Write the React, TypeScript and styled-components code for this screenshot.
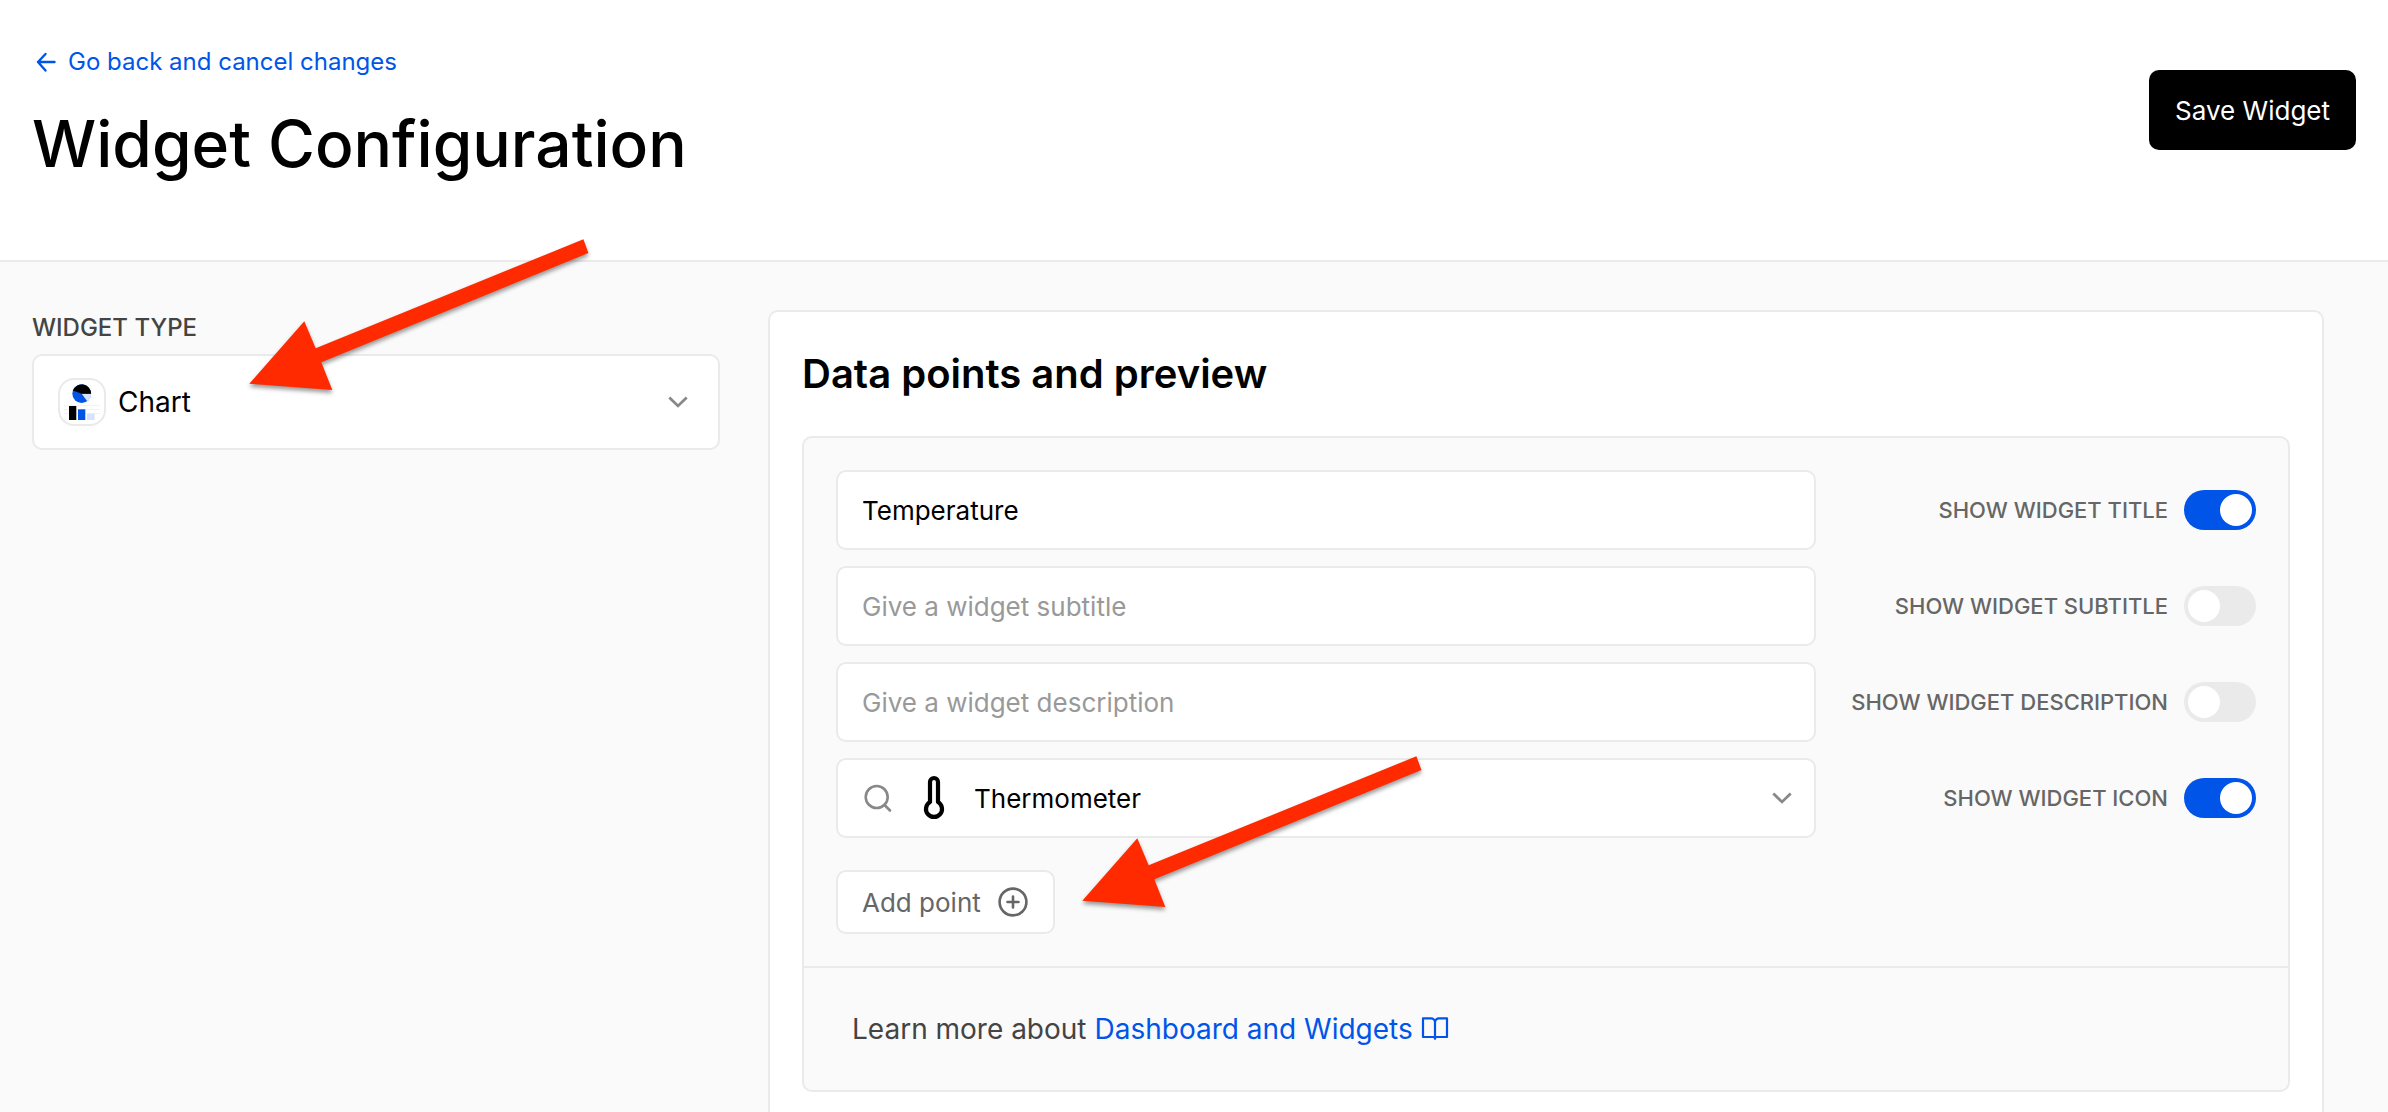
import React, { useId, useState } from "react";
import styled, { createGlobalStyle } from "styled-components";

const color = {
  ink: "#000000",
  text: "#444444",
  muted: "#666666",
  faint: "#999999",
  icon: "#888888",
  line: "#eaeaea",
  ground: "#fafafa",
  surface: "#ffffff",
  accent: "#0055e8",
  accentSoft: "#d9e3fb",
  pointer: "#ff2a00",
};

const GlobalStyle = createGlobalStyle`
  *, *::before, *::after { box-sizing: border-box; }
  body {
    margin: 0;
    background: ${color.ground};
    color: ${color.ink};
    font-family: Inter, "Liberation Sans", sans-serif;
    font-size: 26px;
    -webkit-font-smoothing: antialiased;
  }
  svg { display: block; flex: none; }
`;

const Page = styled.div`
  position: relative;
  min-height: 100vh;
  display: flex;
  flex-direction: column;
`;

const Header = styled.header`
  display: flex;
  justify-content: space-between;
  align-items: flex-start;
  padding: 46px 32px 78px;
  background: ${color.surface};
  border-bottom: 2px solid ${color.line};
`;

const Heading = styled.div`
  display: flex;
  flex-direction: column;
  align-items: flex-start;
  gap: 28px;
`;

const BackLink = styled.a`
  display: flex;
  align-items: center;
  gap: 8px;
  font-size: 24px;
  line-height: 32px;
  color: ${color.accent};
  text-decoration: none;
`;

const Title = styled.h1`
  margin: 0;
  font-size: 64px;
  line-height: 76px;
  font-weight: 500;
`;

const SaveButton = styled.button`
  height: 80px;
  margin-top: 24px;
  padding: 0 26px;
  border: 0;
  border-radius: 10px;
  background: ${color.ink};
  color: ${color.surface};
  font: inherit;
  cursor: pointer;
`;

const Main = styled.main`
  flex: 1;
  display: grid;
  grid-template-columns: 688px 1fr;
  gap: 48px;
  padding: 48px 64px 0 32px;
`;

const Sidebar = styled.div`
  display: flex;
  flex-direction: column;
  gap: 8px;
`;

const Caption = styled.label`
  font-size: 24px;
  line-height: 36px;
  font-weight: 500;
  color: ${color.text};
  text-transform: uppercase;
`;

const SelectBox = styled.div<{ $tall?: boolean }>`
  display: flex;
  align-items: center;
  height: ${(p) => (p.$tall ? 96 : 80)}px;
  padding: 0 ${(p) => (p.$tall ? 28 : 20)}px 0 24px;
  background: ${color.surface};
  border: 2px solid ${color.line};
  border-radius: 10px;
`;

const Select = styled.select<{ $large?: boolean }>`
  flex: 1;
  min-width: 0;
  height: 100%;
  padding: 0;
  border: 0;
  outline: 0;
  appearance: none;
  background: transparent;
  color: ${color.ink};
  font: inherit;
  font-size: ${(p) => (p.$large ? 28 : 26)}px;
`;

const ChartBadge = styled.span`
  display: grid;
  place-items: center;
  width: 48px;
  height: 48px;
  margin-right: 12px;
  border: 2px solid ${color.line};
  border-radius: 16px;
`;

const IconSlot = styled.span`
  display: grid;
  place-items: center;
  width: 48px;
  height: 48px;
  margin: 0 16px 0 18px;
`;

const Panel = styled.section`
  padding: 32px 32px 0;
  background: ${color.surface};
  border: 2px solid ${color.line};
  border-bottom: 0;
  border-radius: 10px 10px 0 0;
`;

const PanelTitle = styled.h2`
  margin: 0 0 32px;
  font-size: 40px;
  line-height: 60px;
  font-weight: 600;
`;

const Card = styled.div`
  background: ${color.ground};
  border: 2px solid ${color.line};
  border-radius: 10px;
`;

const Form = styled.form`
  display: flex;
  flex-direction: column;
  align-items: stretch;
  gap: 16px;
  padding: 32px;
`;

const Row = styled.div`
  display: grid;
  grid-template-columns: 1fr 408px;
  gap: 32px;
  align-items: center;
`;

const TextInput = styled.input`
  width: 100%;
  height: 80px;
  padding: 0 24px;
  background: ${color.surface};
  border: 2px solid ${color.line};
  border-radius: 10px;
  outline: 0;
  color: ${color.ink};
  font: inherit;
  &::placeholder {
    color: ${color.faint};
    opacity: 1;
  }
`;

const SwitchLabel = styled.label`
  display: flex;
  align-items: center;
  justify-content: flex-end;
  gap: 16px;
  font-size: 22px;
  font-weight: 500;
  color: ${color.muted};
  text-transform: uppercase;
  white-space: nowrap;
`;

const Switch = styled.input`
  appearance: none;
  display: flex;
  align-items: center;
  flex: none;
  width: 72px;
  height: 40px;
  margin: 0;
  padding: 0 4px;
  border-radius: 20px;
  background: ${color.line};
  cursor: pointer;
  &::before {
    content: "";
    width: 32px;
    height: 32px;
    border-radius: 50%;
    background: ${color.surface};
  }
  &:checked {
    justify-content: flex-end;
    background: ${color.accent};
  }
`;

const AddButton = styled.button`
  display: flex;
  align-items: center;
  align-self: flex-start;
  gap: 16px;
  height: 64px;
  margin-top: 16px;
  padding: 0 24px;
  background: ${color.surface};
  border: 2px solid ${color.line};
  border-radius: 10px;
  color: ${color.muted};
  font: inherit;
  cursor: pointer;
`;

const CardFooter = styled.p`
  display: flex;
  align-items: center;
  gap: 8px;
  margin: 0;
  padding: 40px 48px;
  border-top: 2px solid ${color.line};
  font-size: 28px;
  line-height: 42px;
  color: ${color.text};
`;

const DocsLink = styled.a`
  display: flex;
  align-items: center;
  gap: 8px;
  color: ${color.accent};
  text-decoration: none;
`;

const Pointer = styled.svg<{ $x: number; $y: number }>`
  position: absolute;
  left: ${(p) => p.$x}px;
  top: ${(p) => p.$y}px;
  overflow: visible;
  pointer-events: none;
  filter: drop-shadow(0 3px 2px rgba(0, 0, 0, 0.4));
`;

const stroke = {
  fill: "none",
  stroke: "currentColor",
  strokeLinecap: "round" as const,
  strokeLinejoin: "round" as const,
};

const BackArrow = () => (
  <svg width="28" height="28" viewBox="0 0 28 28" {...stroke} strokeWidth="2.4">
    <path d="M22.500 14H6M13.500 6 6 14l7.500 8.500" />
  </svg>
);

const Chevron = () => (
  <svg width="24" height="24" viewBox="0 0 24 24" fill="none" stroke={color.icon} strokeWidth="2.8">
    <path d="M3.300 7.500 12 15.900 20.700 7.500" />
  </svg>
);

const SearchIcon = () => (
  <svg width="30" height="30" viewBox="0 0 30 30" {...stroke} stroke={color.icon} strokeWidth="2.6">
    <circle cx="14.700" cy="14" r="11" />
    <path d="m22.500 22 5.500 5.500" />
  </svg>
);

const ThermometerIcon = () => (
  <svg width="48" height="48" viewBox="0 0 48 48" {...stroke} stroke={color.ink} strokeWidth="4.2">
    <path d="M28 28V8a4 4 0 0 0-8 0v20a8 8 0 1 0 8 0z" />
  </svg>
);

const PlusCircleIcon = () => (
  <svg width="32" height="32" viewBox="0 0 32 32" {...stroke} strokeWidth="2.6">
    <circle cx="16" cy="16" r="13.400" />
    <path d="M16 10.500v11M10.500 16h11" />
  </svg>
);

const BookIcon = () => (
  <svg width="28" height="30" viewBox="2 0 28 30" {...stroke} strokeWidth="2.2">
    <path d="M4 4.300h8a4 4 0 0 1 4 4v16.500a1.800 1.800 0 0 0-1.800-1.800H4zM28 4.300h-8a4 4 0 0 0-4 4v16.500a1.800 1.800 0 0 1 1.800-1.800H28z" />
  </svg>
);

const ChartGlyph = () => (
  <svg width="44" height="44" viewBox="0 0 44 44">
    <path d="M4 25.500h36M4 29.500h36M4 33.500h36" stroke="#f3f3f3" strokeWidth="1" />
    <circle cx="21.700" cy="13.700" r="9.400" fill={color.accent} />
    <path d="M21.700 13.700h9.400a9.400 9.400 0 0 1-3.900 7.600z" fill={color.accentSoft} />
    <path d="M31.100 13.700a9.400 9.400 0 0 0-18.200-3.200l8.800 3.200z" fill={color.ink} />
    <path d="M9 26h7.300v14H9z" fill={color.ink} />
    <path d="M18 29.300h7.300V40H18z" fill={color.accent} />
    <path d="M27 33.700h7.700V40H27z" fill={color.accentSoft} />
  </svg>
);

const PointerArrow = ({ x, y }: { x: number; y: number }) => (
  <Pointer $x={x} $y={y} width="340" height="152" viewBox="0 0 340 152" aria-hidden="true">
    <path
      d="M.3 144.700 55.300 82.300l11.400 27L334.400.300l5 13.700L72.300 123.300l11 27.700z"
      fill={color.pointer}
    />
  </Pointer>
);

function Toggle({ label, initial }: { label: string; initial: boolean }) {
  const [on, setOn] = useState(initial);
  return (
    <SwitchLabel>
      {label}
      <Switch type="checkbox" role="switch" checked={on} onChange={() => setOn(!on)} />
    </SwitchLabel>
  );
}

export default function App() {
  const typeId = useId();
  return (
    <>
      <GlobalStyle />
      <Page>
        <Header>
          <Heading>
            <BackLink href="#back">
              <BackArrow />
              Go back and cancel changes
            </BackLink>
            <Title>Widget Configuration</Title>
          </Heading>
          <SaveButton type="button">Save Widget</SaveButton>
        </Header>
        <Main>
          <Sidebar>
            <Caption htmlFor={typeId}>Widget type</Caption>
            <SelectBox $tall>
              <ChartBadge>
                <ChartGlyph />
              </ChartBadge>
              <Select id={typeId} $large defaultValue="Chart">
                <option>Chart</option>
              </Select>
              <Chevron />
            </SelectBox>
          </Sidebar>
          <Panel>
            <PanelTitle>Data points and preview</PanelTitle>
            <Card>
              <Form onSubmit={(e) => e.preventDefault()}>
                <Row>
                  <TextInput aria-label="Widget title" defaultValue="Temperature" />
                  <Toggle label="Show widget title" initial />
                </Row>
                <Row>
                  <TextInput aria-label="Widget subtitle" placeholder="Give a widget subtitle" />
                  <Toggle label="Show widget subtitle" initial={false} />
                </Row>
                <Row>
                  <TextInput aria-label="Widget description" placeholder="Give a widget description" />
                  <Toggle label="Show widget description" initial={false} />
                </Row>
                <Row>
                  <SelectBox>
                    <SearchIcon />
                    <IconSlot>
                      <ThermometerIcon />
                    </IconSlot>
                    <Select aria-label="Widget icon" defaultValue="Thermometer">
                      <option>Thermometer</option>
                    </Select>
                    <Chevron />
                  </SelectBox>
                  <Toggle label="Show widget icon" initial />
                </Row>
                <AddButton type="button">
                  Add point
                  <PlusCircleIcon />
                </AddButton>
              </Form>
              <CardFooter>
                Learn more about
                <DocsLink href="#docs">
                  Dashboard and Widgets
                  <BookIcon />
                </DocsLink>
              </CardFooter>
            </Card>
          </Panel>
        </Main>
        <PointerArrow x={249} y={239} />
        <PointerArrow x={1082} y={756} />
      </Page>
    </>
  );
}
